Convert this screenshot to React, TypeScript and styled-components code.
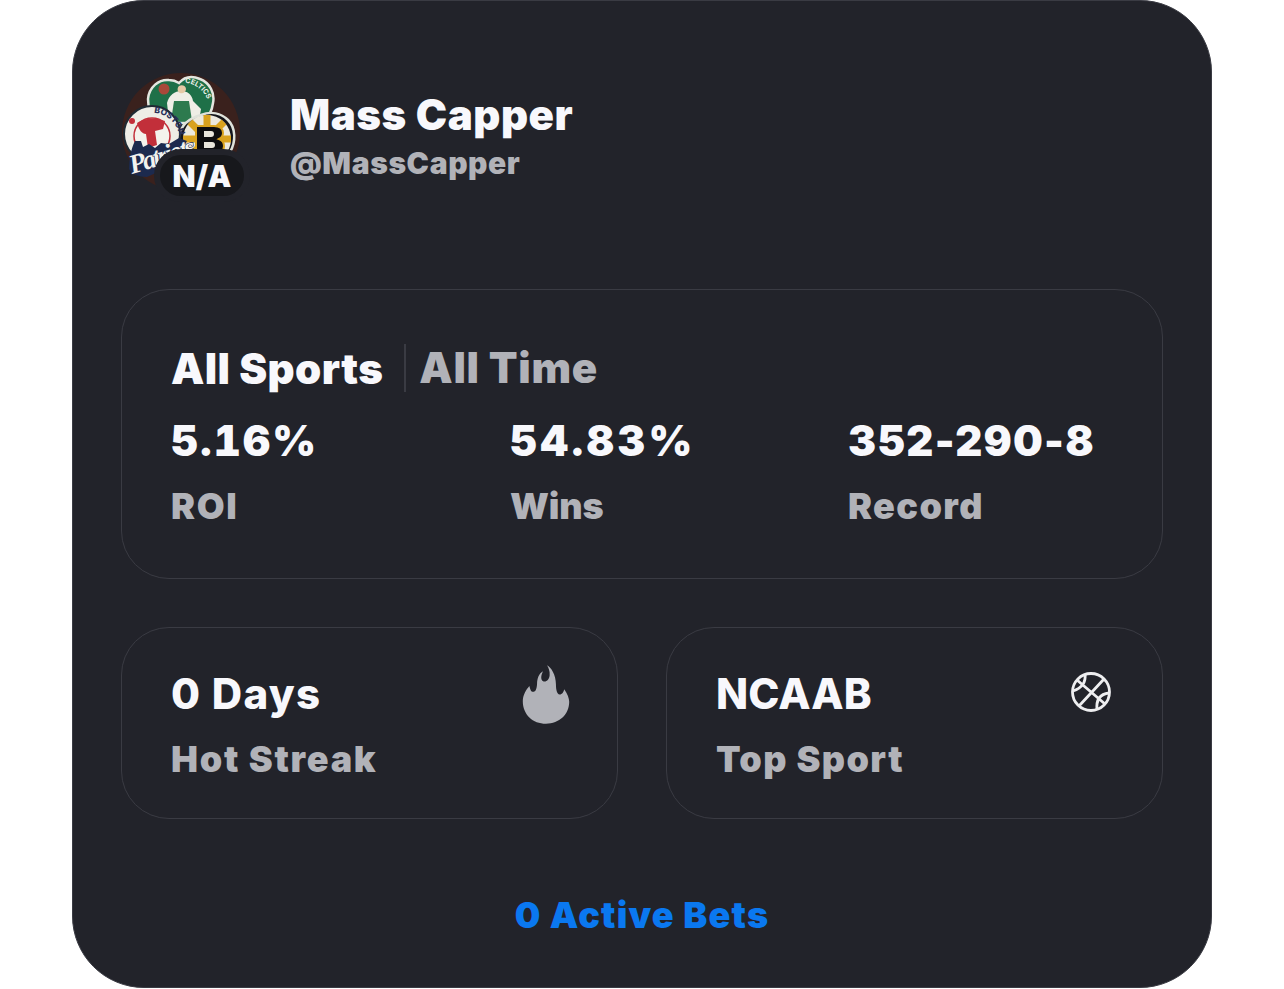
import React from 'react';
import styled, { createGlobalStyle } from 'styled-components';

const Global = createGlobalStyle`
  html, body { margin: 0; padding: 0; background: #fff; }
  * { box-sizing: border-box; }
`;
const Page = styled.div`
  width: 1284px; height: 989px; display: flex; justify-content: center;
  font-family: Inter, "Liberation Sans", sans-serif;
`;
const Card = styled.div`
  width: 1140px; height: 988px; background: #22232a; border: 1px solid #3a3b43; border-radius: 72px;
  padding: 72px 48px 0; display: flex; flex-direction: column;
`;
const Header = styled.div`display: flex; align-items: flex-start; gap: 49px; height: 216px;`;
const AvatarWrap = styled.div`position: relative; width: 120px; height: 120px;`;
const Badge = styled.div`
  position: absolute; left: 33px; top: 76px; width: 96px; height: 53px; border-radius: 27px; background: #17181c;
  border: 6px solid #22232a;
  color: #f8f8fc; font-size: 30px; font-weight: 900; letter-spacing: 0.2px; display: flex; align-items: center; justify-content: center;
`;
const Name = styled.div`color: #f8f8fc; font-size: 42px; font-weight: 900; letter-spacing: 0.55px; line-height: 50px; margin-top: 17px;`;
const Handle = styled.div`color: #b1b2b8; font-size: 30px; font-weight: 900; letter-spacing: 0.6px; line-height: 40px; margin-top: 3px;`;
const Panel = styled.div`border: 1px solid #3a3b43; border-radius: 48px; padding: 48px 48px 0 49px;`;
const Stats = styled(Panel)`height: 290px;`;
const Tabs = styled.div`display: flex; align-items: center; height: 60px;`;
const Tab = styled.div<{ $on?: boolean }>`
  font-size: 42px; font-weight: 900; letter-spacing: ${p => p.$on ? '0.4px' : '0.7px'}; line-height: 60px;
  margin-top: ${p => p.$on ? '2px' : '0'};
  color: ${p => p.$on ? '#f8f8fc' : '#b1b2b8'};
`;
const Sep = styled.div`width: 2px; height: 48px; background: #3a3b43; margin: 0 13px 0 21px;`;
const Grid = styled.div`display: grid; grid-template-columns: 339px 338px 1fr; margin-top: 13px;`;
const Value = styled.div<{ $track: number; $tab?: boolean; $weight?: number }>`
  color: #f8f8fc; font-size: 42px; font-weight: ${p => p.$weight ?? 900}; line-height: 60px;
  letter-spacing: ${p => p.$track}px;
  font-variant-numeric: ${p => p.$tab ? 'tabular-nums' : 'normal'};
`;
const Label = styled.div<{ $track?: number }>`
  color: #b1b2b8; font-size: 36px; font-weight: 900; letter-spacing: ${p => p.$track ?? 1.4}px; line-height: 48px; margin-top: 11px;
`;
const Row = styled.div`display: grid; grid-template-columns: 1fr 1fr; gap: 48px; margin-top: 48px;`;
const Small = styled(Panel)`height: 192px; display: flex; justify-content: space-between; padding-top: 36px; padding-right: 46px;`;
const BallSlot = styled.div`margin: 7px 4px 0 0;`;
const Active = styled.div`color: #0a78f0; font-size: 36px; font-weight: 900; letter-spacing: 1.2px; text-align: center; margin-top: 72px; line-height: 48px;`;

const Avatar = () => (
  <svg width="120" height="120" viewBox="0 0 120 120">
    <defs>
      <path id="bostonArc" d="M33 40C47 41 57 51 59 66" />
      <path id="celtArc" d="M64 10C76 10 88 22 89 36" />
    </defs>
    <circle cx="60" cy="59" r="59" fill="#3a211d" />
    {/* Celtics */}
    <path fill="#1e7048" stroke="#e4e6df" strokeWidth="2.500" d="M58 10C64 3 72 3 79 6c10 4 15 14 13 24-1 8-5 15-10 20H36c-6-6-9-15-9-24C28 14 38 6 48 7c4 0 7 1 10 3Z" />
    <path fill="#efeee6" d="M46 30c2-8 8-12 14-12 7 0 11 4 12 10l8 8-2 12H48Z" />
    <path fill="#2d7a4e" d="M53 28h15l3 20H50Z" />
    <path fill="#e5c9a6" d="M58 13c3-2 7 0 7 3s-3 5-6 4-3-5-1-7Z" />
    <circle cx="43" cy="16" r="5.500" fill="#a8483a" />
    <text fontSize="7" fontWeight="700" fontFamily="Inter, sans-serif" fill="#eef0e8"><textPath href="#celtArc">CELTICS</textPath></text>
    {/* Bruins */}
    <path fill="#14151a" stroke="#dfe2da" strokeWidth="2.500" d="M80 42c10-4 20-2 27 5 8 8 8 22 2 32-3 5-7 10-11 14H68c-8-8-12-20-10-30 2-11 11-18 22-21Z" />
    <circle cx="86" cy="66" r="24" fill="#ece9de" />
    <path stroke="#d9a21e" strokeWidth="7" d="M86 42v48M62 66h48M69 49l34 34M103 49 69 83" />
    <path fill="#0e0e10" stroke="#d9a21e" strokeWidth="2" d="M75 53h18c6 0 9 3 9 7 0 3-2 5-4 6 3 1 5 3 5 7 0 5-4 8-10 8H75Z" />
    <path fill="#e9e6dc" d="M83 58h7c2 0 3 1 3 3s-1 3-3 3h-7ZM83 69h8c2 0 3 1 3 3s-1 3-3 3h-8Z" />
    {/* Red Sox */}
    <circle cx="31" cy="61" r="28" fill="#eeede6" stroke="#1f2a33" strokeWidth="2" />
    <circle cx="31" cy="63" r="18" fill="#f4f2ec" stroke="#c22f3a" strokeWidth="1.500" />
    <path fill="#c22f3a" d="M16 50c7-5 18-6 28-2l-2 8-8 2 2 14-9 3-2-14c-4 0-7-4-9-11Z" />
    <text fontSize="8.500" fontWeight="800" fontFamily="Inter, sans-serif" fill="#27305a"><textPath href="#bostonArc">BOSTON</textPath></text>
    <circle cx="11" cy="48" r="3" fill="#c22f3a" />
    {/* Patriots */}
    <path fill="#1c2a4e" d="M14 68h6l2 6 6-3 6 4 6-5 8 1 10-6 8 3-14 24-26 12c-8 0-16-3-18-8 0-10 2-20 6-28Z" />
    <text x="11" y="101" fontSize="27" fontStyle="italic" fontWeight="700" fontFamily="Liberation Serif, serif" fill="#f2f2ee" stroke="#1c2a4e" strokeWidth="1.200" paintOrder="stroke" textLength="68" transform="rotate(-17 11 101)">Patriots</text>
  </svg>
);
const Flame = () => (
  <svg width="50" height="61" viewBox="60 38 150 184">
    <path fill="#b1b2b8" d="M138 42C150 48 165 70 165 100C165 115 168 130 176 130C184 130 188 122 190 114C200 128 205 142 205 152C205 190 175 218 135 218C95 218 65 190 65 150C65 132 75 115 85 104C87 114 90 122 96 122C104 122 107 112 108 98C108 82 114 66 126 60C120 72 118 85 126 90C136 94 145 84 146 72C147 60 143 50 138 42Z"/>
  </svg>
);
const Ball = () => (
  <svg width="42" height="42" viewBox="0 0 42 42" fill="none" stroke="#eeeef0" strokeWidth="2.800" display="block">
    <circle cx="21" cy="21" r="18.500"/>
    <path d="M7 9 35 33M34 8 9 35M15 3c1 8-3 14-12 17M39 22c-9 1-13 7-12 17"/>
  </svg>
);

export default function App() {
  return (
    <Page>
      <Global />
      <Card>
        <Header>
          <AvatarWrap><Avatar /><Badge>N/A</Badge></AvatarWrap>
          <div><Name>Mass Capper</Name><Handle>@MassCapper</Handle></div>
        </Header>
        <Stats>
          <Tabs><Tab $on>All Sports</Tab><Sep /><Tab>All Time</Tab></Tabs>
          <Grid>
            <div><Value $track={2.2} $tab>5.16%</Value><Label $track={1.6}>ROI</Label></div>
            <div><Value $track={3.8} $tab>54.83%</Value><Label $track={-0.2}>Wins</Label></div>
            <div><Value $track={1.15}>352-290-8</Value><Label $track={1.4}>Record</Label></div>
          </Grid>
        </Stats>
        <Row>
          <Small>
            <div><Value $track={1.3} $weight={800}>0 Days</Value><Label $track={1.7}>Hot Streak</Label></div>
            <Flame />
          </Small>
          <Small>
            <div><Value $track={0.1} $weight={800}>NCAAB</Value><Label $track={1.4}>Top Sport</Label></div>
            <BallSlot><Ball /></BallSlot>
          </Small>
        </Row>
        <Active>0 Active Bets</Active>
      </Card>
    </Page>
  );
}
